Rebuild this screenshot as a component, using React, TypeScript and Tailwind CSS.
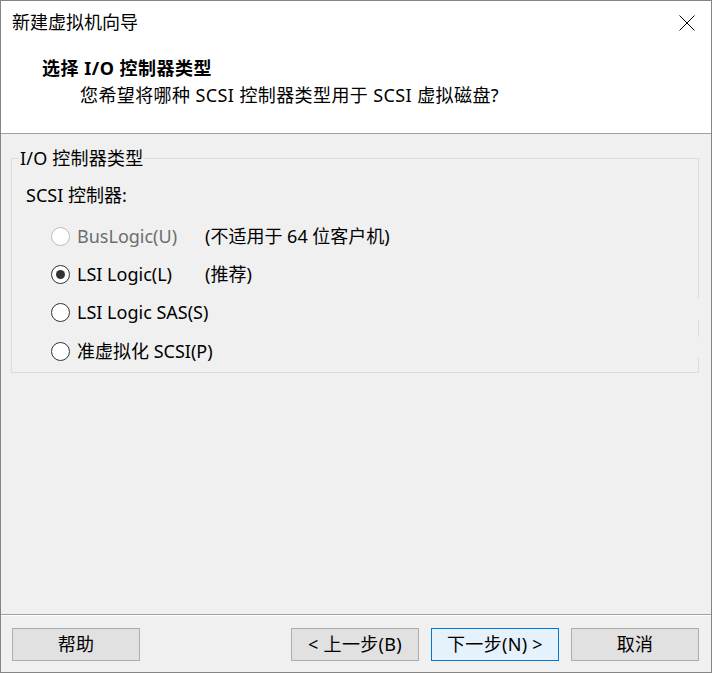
import { useState } from 'react';

type Opt = { id: string; label: string; note?: string; disabled?: boolean };

const OPTIONS: Opt[] = [
  { id: 'buslogic', label: 'BusLogic(U)', note: '(不适用于 64 位客户机)', disabled: true },
  { id: 'lsi', label: 'LSI Logic(L)', note: '(推荐)' },
  { id: 'sas', label: 'LSI Logic SAS(S)' },
  { id: 'pvscsi', label: '准虚拟化 SCSI(P)' },
];

function Radio({ checked, disabled }: { checked: boolean; disabled?: boolean }) {
  return (
    <span
      className={
        'w-[19px] h-[19px] rounded-full border flex items-center justify-center shrink-0 ' +
        (disabled ? 'border-[#bcbcbc] bg-white' : 'border-[#333333] bg-white')
      }
    >
      {checked && <span className="w-[9px] h-[9px] rounded-full bg-[#333333]" />}
    </span>
  );
}

function Btn({ children, primary }: { children: React.ReactNode; primary?: boolean }) {
  return (
    <button
      className={
        'w-[128px] h-[33px] border flex items-center justify-center text-black tracking-[0.3px] ' +
        (primary ? 'bg-[#e5f1fb] border-[#0078d7]' : 'bg-[#e1e1e1] border-[#adadad]')
      }
    >
      {children}
    </button>
  );
}

export default function App() {
  const [value, setValue] = useState('lsi');

  return (
    <div className="w-[712px] h-[673px] border border-[#858585] bg-[#f0f0f0] flex flex-col text-[18px] text-black font-['Noto_Sans','Noto_Sans_CJK_SC',sans-serif]">
      {/* header */}
      <div className="h-[133px] bg-white border-b border-[#a0a0a0] flex flex-col">
        <div className="h-[42px] flex items-center justify-between pl-[11px] pr-[16px]">
          <span className="leading-[24px]">新建虚拟机向导</span>
          <svg width="16" height="16" viewBox="0 0 16 16" className="mt-[1px]">
            <path d="M0.5 0.5 L15.5 15.5 M15.5 0.5 L0.5 15.5" stroke="#000" strokeWidth="1" fill="none" />
          </svg>
        </div>
        <div className="h-[26px] mt-[12px] pl-[41px] flex items-center font-bold tracking-[0.5px] leading-[26px]">
          选择 I/O 控制器类型
        </div>
        <div className="h-[26px] mt-[1px] pl-[79px] flex items-center tracking-[0.4px] leading-[26px]">
          您希望将哪种 SCSI 控制器类型用于 SCSI 虚拟磁盘?
        </div>
      </div>

      {/* body */}
      <div className="flex-1 pl-[10px] pr-[12px]">
        <fieldset className="relative mt-[12px] border border-[#dcdcdc] pb-[9px]">
          <legend className="ml-[7px] px-[1px] leading-[24px] tracking-[0.2px]">I/O 控制器类型</legend>
          {/* gaps in the right border */}
          <span className="absolute right-[-1px] top-[128px] w-[1px] h-[22px] bg-[#f0f0f0]" />
          <span className="absolute right-[-1px] top-[167px] w-[1px] h-[21px] bg-[#f0f0f0]" />
          <div className="h-[24px] mt-[13px] pl-[14px] flex items-center leading-[24px]">SCSI 控制器:</div>
          <div className="flex flex-col gap-[14px] mt-[17px] pl-[39px]">
            {OPTIONS.map((o, i) => (
              <label
                key={o.id}
                className={'h-[24px] flex items-center leading-[24px] whitespace-nowrap ' + (i === 3 ? 'mt-[1px]' : '')}
                onClick={() => !o.disabled && setValue(o.id)}
              >
                <Radio checked={value === o.id} disabled={o.disabled} />
                <span className={'min-w-[135px] pl-[7px] ' + (o.disabled ? 'text-[#6d6d6d]' : '')}>{o.label}</span>
                {o.note && <span>{o.note}</span>}
              </label>
            ))}
          </div>
        </fieldset>
      </div>

      {/* footer */}
      <div className="border-t border-[#a0a0a0]">
        <div className="border-t border-white h-[57px] pt-[12px] pl-[11px] pr-[12px] flex items-start justify-between">
          <Btn>帮助</Btn>
          <div className="flex gap-[12px]">
            <Btn>&lt; 上一步(B)</Btn>
            <Btn primary>下一步(N) &gt;</Btn>
            <Btn>取消</Btn>
          </div>
        </div>
      </div>
    </div>
  );
}
